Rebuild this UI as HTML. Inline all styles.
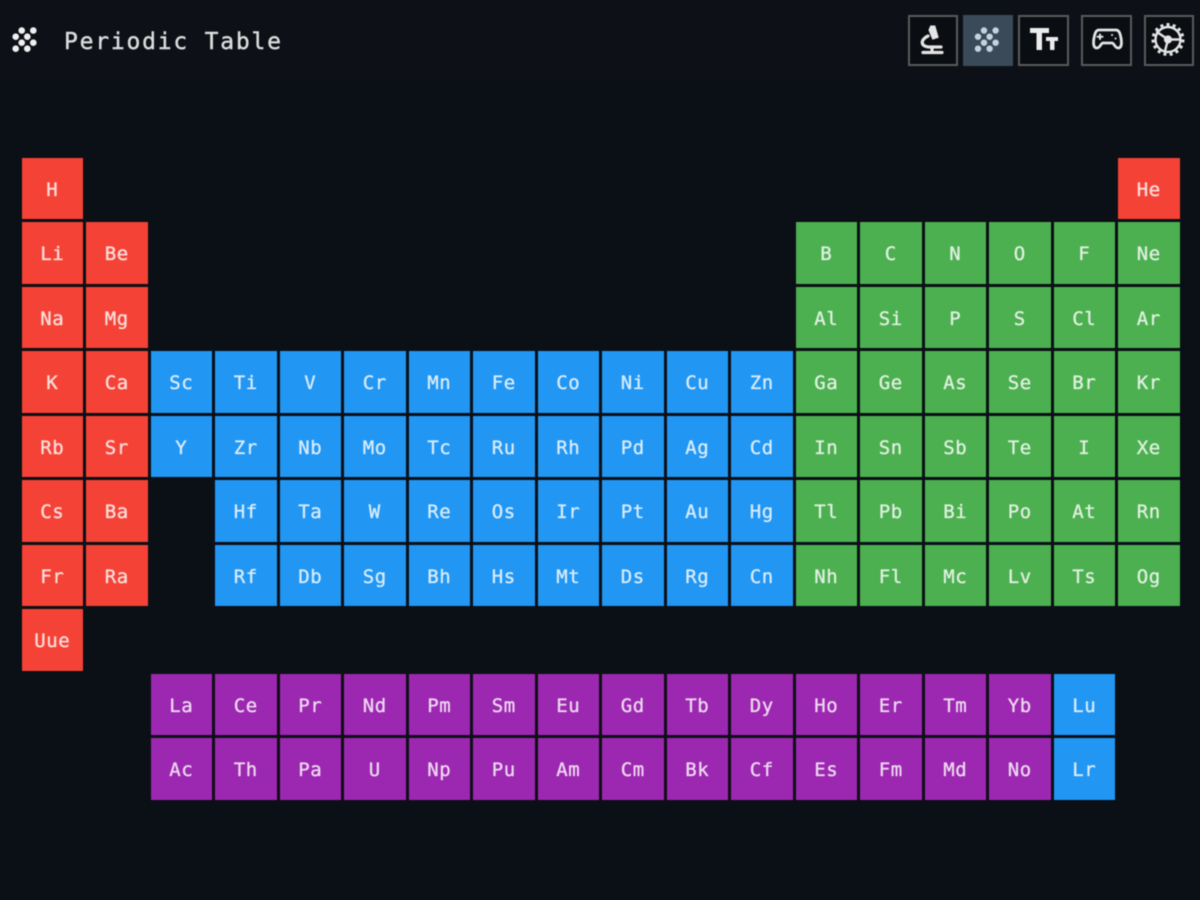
<!DOCTYPE html>
<html lang="en"><head><meta charset="utf-8"><title>Periodic Table</title>
<style>
html,body{margin:0;padding:0;width:1200px;height:900px;overflow:hidden;background:#0b0f16}
#w{position:relative;width:1200px;height:900px;filter:blur(.6px)}
#h{position:absolute;left:0;top:0;width:1200px;height:80px;background:#0d1117}
#t{position:absolute;left:64px;top:27px;font:23px/30px "DejaVu Sans Mono",monospace;letter-spacing:1.78px;color:#dcdcdc;white-space:pre;-webkit-text-stroke:.4px #dcdcdc}
.b{position:absolute;top:14.500px;height:47px;border:2px solid #5a5a5a;background:#0a0d12}
.a{background:#3b4a58;border-color:#3b4a58}
.g{position:absolute;display:grid;grid-auto-rows:61.500px;gap:3px;font:19px/65px "DejaVu Sans Mono",monospace;text-align:center;letter-spacing:.6px;color:rgba(255,255,255,.8);-webkit-text-stroke:.35px rgba(255,255,255,.75)}
#g{left:21.500px;top:157.500px;grid-template-columns:repeat(18,61.500px)}
#g2{left:150.500px;top:673.500px;grid-template-columns:repeat(15,61.500px)}
.g div{height:61.500px;overflow:hidden}
.r{background:#f44336}.l{background:#2196f3}.n{background:#4caf50}.p{background:#9c27b0}
svg{position:absolute;left:0;top:0}
</style></head><body><div id="w">
<div id="h"></div>
<div id="t">Periodic Table</div>
<div class="b" style="left:908px;width:46px"></div>
<div class="b a" style="left:963px;width:46px"></div>
<div class="b" style="left:1018px;width:47px"></div>
<div class="b" style="left:1081px;width:47px"></div>
<div class="b" style="left:1144px;width:46px"></div>
<svg width="1200" height="80" viewBox="0 0 1200 80">
<g fill="#f0f0f0"><circle cx="21.7" cy="30.5" r="3.3"/><circle cx="33.3" cy="30.5" r="3.3"/><circle cx="15.7" cy="36.7" r="3.3"/><circle cx="27.3" cy="36.7" r="3.3"/><circle cx="21.7" cy="42.7" r="3.3"/><circle cx="33.3" cy="42.7" r="3.3"/><circle cx="15.7" cy="48.7" r="3.3"/><circle cx="27.3" cy="48.7" r="3.3"/></g>
<g fill="#c5d3de" transform="translate(962.3 0)"><circle cx="21.7" cy="30.5" r="3.2"/><circle cx="33.3" cy="30.5" r="3.2"/><circle cx="15.7" cy="36.7" r="3.2"/><circle cx="27.3" cy="36.7" r="3.2"/><circle cx="21.7" cy="42.7" r="3.2"/><circle cx="33.3" cy="42.7" r="3.2"/><circle cx="15.7" cy="48.7" r="3.2"/><circle cx="27.3" cy="48.7" r="3.2"/></g>
<g fill="none" stroke="#e4e4e4" stroke-width="3.200" stroke-linecap="round">
<path d="M923 52.500H942M932 47V52"/><path d="M928 36C920 39.500 920 47 930 47H941"/><path d="M931 26.500L934.500 26.500L937.500 37L933 38.500L929.500 30Z" stroke-width="2" fill="#e4e4e4"/>
<path d="M1099 30H1116C1119 30 1120 33 1121 38C1122 44 1121.500 48 1118 48C1115 48 1114 43 1112 43H1103C1101 43 1100 48 1097 48C1093.500 48 1093 44 1094 38C1095 33 1096 30 1099 30Z" stroke-width="2.800"/><path d="M1100 34.500V39M1097.500 36.800H1102.500M1112 35H1112.100M1115.500 38.500H1115.600" stroke-width="2"/>
<circle cx="1168" cy="39.500" r="12.500" stroke-width="2.400"/><circle cx="1168" cy="39.500" r="15" stroke-width="3" stroke-dasharray="3 3.280" stroke-linecap="butt"/><path d="M1168 39.500L1157 32M1168 39.500L1180 39.500M1168 39.500L1165 51" stroke-width="2.400"/><circle cx="1168" cy="39.500" r="2.500" fill="#e4e4e4"/>
</g>
<g fill="#ececec"><rect x="1030" y="28" width="19" height="5"/><rect x="1036.500" y="28" width="5.500" height="22"/><rect x="1046" y="37" width="12" height="4"/><rect x="1050" y="37" width="4.500" height="13"/></g>
</svg>
<div id="g" class="g">
<div class="r">H</div><div class="r" style="grid-column:18">He</div>
<div class="r">Li</div><div class="r">Be</div><div class="n" style="grid-column:13">B</div><div class="n">C</div><div class="n">N</div><div class="n">O</div><div class="n">F</div><div class="n">Ne</div>
<div class="r">Na</div><div class="r">Mg</div><div class="n" style="grid-column:13">Al</div><div class="n">Si</div><div class="n">P</div><div class="n">S</div><div class="n">Cl</div><div class="n">Ar</div>
<div class="r">K</div><div class="r">Ca</div><div class="l">Sc</div><div class="l">Ti</div><div class="l">V</div><div class="l">Cr</div><div class="l">Mn</div><div class="l">Fe</div><div class="l">Co</div><div class="l">Ni</div><div class="l">Cu</div><div class="l">Zn</div><div class="n">Ga</div><div class="n">Ge</div><div class="n">As</div><div class="n">Se</div><div class="n">Br</div><div class="n">Kr</div>
<div class="r">Rb</div><div class="r">Sr</div><div class="l">Y</div><div class="l">Zr</div><div class="l">Nb</div><div class="l">Mo</div><div class="l">Tc</div><div class="l">Ru</div><div class="l">Rh</div><div class="l">Pd</div><div class="l">Ag</div><div class="l">Cd</div><div class="n">In</div><div class="n">Sn</div><div class="n">Sb</div><div class="n">Te</div><div class="n">I</div><div class="n">Xe</div>
<div class="r">Cs</div><div class="r">Ba</div><div class="l" style="grid-column:4">Hf</div><div class="l">Ta</div><div class="l">W</div><div class="l">Re</div><div class="l">Os</div><div class="l">Ir</div><div class="l">Pt</div><div class="l">Au</div><div class="l">Hg</div><div class="n">Tl</div><div class="n">Pb</div><div class="n">Bi</div><div class="n">Po</div><div class="n">At</div><div class="n">Rn</div>
<div class="r">Fr</div><div class="r">Ra</div><div class="l" style="grid-column:4">Rf</div><div class="l">Db</div><div class="l">Sg</div><div class="l">Bh</div><div class="l">Hs</div><div class="l">Mt</div><div class="l">Ds</div><div class="l">Rg</div><div class="l">Cn</div><div class="n">Nh</div><div class="n">Fl</div><div class="n">Mc</div><div class="n">Lv</div><div class="n">Ts</div><div class="n">Og</div>
<div class="r" style="grid-column:1">Uue</div>
</div>
<div id="g2" class="g">
<div class="p">La</div><div class="p">Ce</div><div class="p">Pr</div><div class="p">Nd</div><div class="p">Pm</div><div class="p">Sm</div><div class="p">Eu</div><div class="p">Gd</div><div class="p">Tb</div><div class="p">Dy</div><div class="p">Ho</div><div class="p">Er</div><div class="p">Tm</div><div class="p">Yb</div><div class="l">Lu</div>
<div class="p">Ac</div><div class="p">Th</div><div class="p">Pa</div><div class="p">U</div><div class="p">Np</div><div class="p">Pu</div><div class="p">Am</div><div class="p">Cm</div><div class="p">Bk</div><div class="p">Cf</div><div class="p">Es</div><div class="p">Fm</div><div class="p">Md</div><div class="p">No</div><div class="l">Lr</div>
</div>
</div></body></html>
